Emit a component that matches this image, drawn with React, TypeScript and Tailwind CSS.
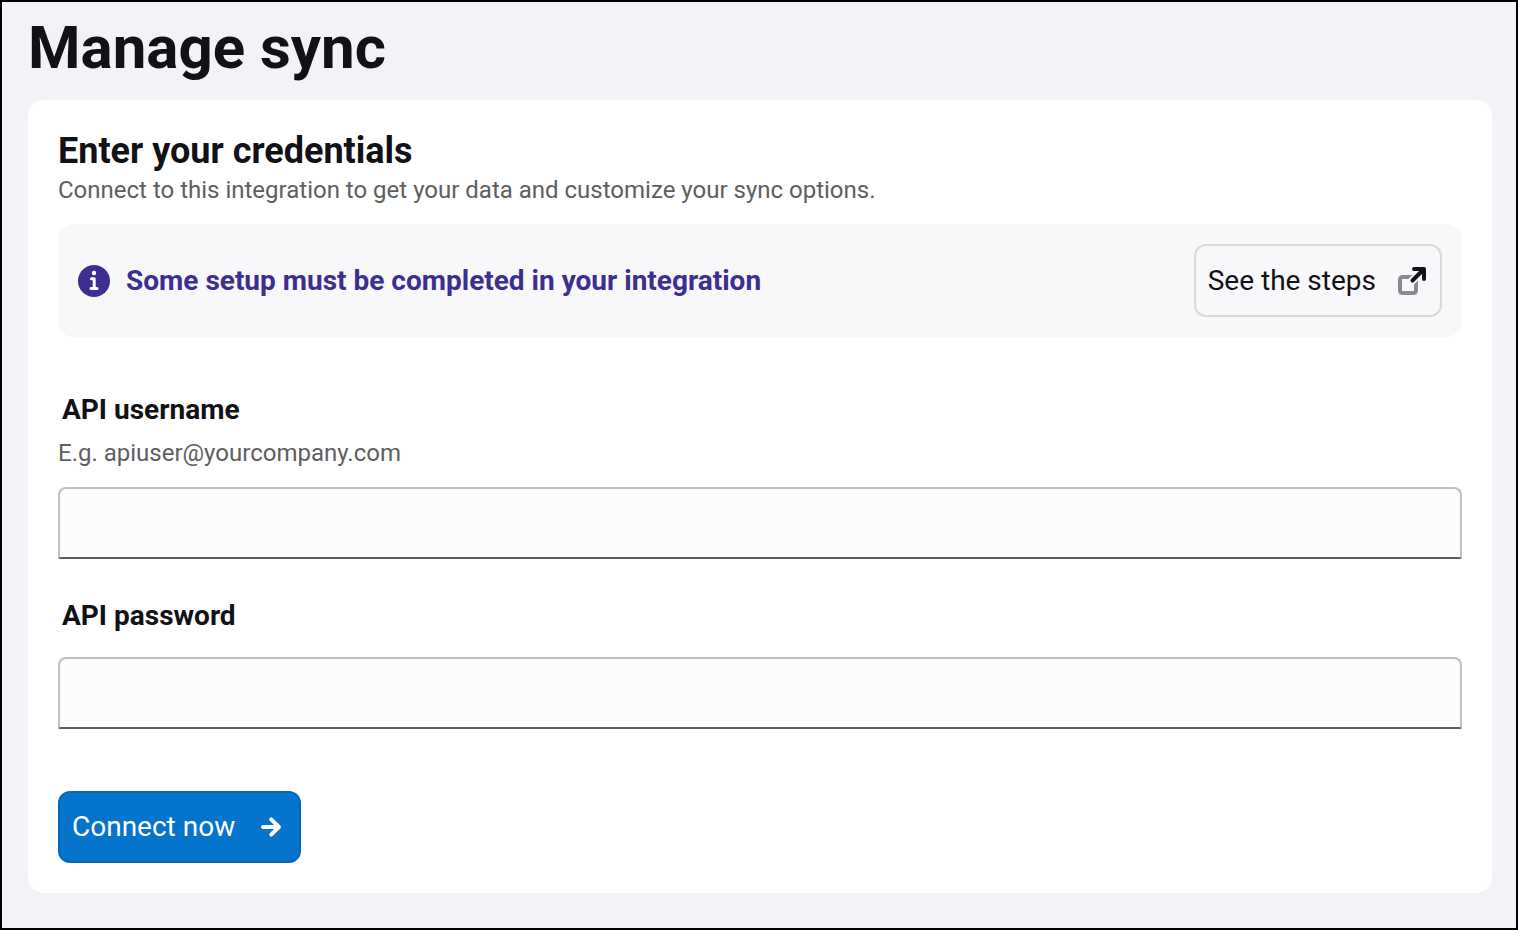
import React from "react";

function InfoIcon() {
  return (
    <svg viewBox="0 0 32 32" className="size-8 shrink-0" aria-hidden="true">
      <circle cx="16" cy="16" r="16" fill="#3d2f8f" />
      <circle cx="16" cy="8" r="2.2" fill="#fff" />
      <path d="M13.5 13.7h2.7v9.8M13 23.5h6" fill="none" stroke="#fff" strokeWidth="3" strokeLinecap="round" strokeLinejoin="round" />
    </svg>
  );
}

function OpenIcon() {
  return (
    <svg viewBox="0 0 32 32" className="size-8 shrink-0" fill="none" aria-hidden="true">
      <rect x="4" y="12" width="16" height="16" rx="2.5" stroke="#8a8a8e" strokeWidth="4" />
      <path d="M16 16 27 5" stroke="#f8f8fb" strokeWidth="8" strokeLinecap="round" />
      <path d="M18 4H28v10M27 5 16.5 15.5" stroke="#12121a" strokeWidth="4" strokeLinecap="round" strokeLinejoin="round" />
    </svg>
  );
}

function ArrowIcon() {
  return (
    <svg viewBox="0 0 32 32" className="size-8 shrink-0" fill="none" aria-hidden="true">
      <path d="M8 16H23M16.2 8.3 23.9 16 16.2 23.7" stroke="#fff" strokeWidth="4" strokeLinecap="round" strokeLinejoin="round" />
    </svg>
  );
}

const labelClass = "block px-1 text-[28px] leading-9 font-bold";
const inputClass =
  "block h-[72px] w-full rounded-t-lg rounded-b-xs border-2 border-[#bfbfbf] border-b-[#5c5c5c] bg-[#fcfcfc] px-3 text-[28px] outline-none";

export default function App() {
  return (
    <main className="min-h-screen border-2 border-black bg-[#f3f2f7] pr-6 pl-[26px] pt-[10px] pb-8 font-[Roboto,sans-serif] text-[#111116]">
      <h1 className="text-[60px] leading-[72px] font-bold">Manage sync</h1>
      <section className="mt-4 rounded-2xl bg-white p-[30px]">
        <h2 className="text-[36px] leading-[42px] font-bold">Enter your credentials</h2>
        <p className="text-[24px] leading-9 text-[#5e5e5e]">
          Connect to this integration to get your data and customize your sync options.
        </p>
        <div className="mt-4 flex items-center gap-4 rounded-2xl bg-[#f8f8fb] p-5">
          <InfoIcon />
          <p className="flex-1 text-[28px] leading-9 font-bold text-[#3d2f8f]">
            Some setup must be completed in your integration
          </p>
          <button type="button" className="flex h-[73px] items-center gap-5 rounded-xl border-2 border-[#d9d9dc] px-3 text-[28px] leading-9">
            See the steps
            <OpenIcon />
          </button>
        </div>
        <form className="mt-[55px]" onSubmit={(e) => e.preventDefault()}>
          <label htmlFor="api-username" className={labelClass}>API username</label>
          <p id="api-username-hint" className="mt-[7px] text-[24px] leading-9 text-[#5e5e5e]">
            E.g. apiuser@yourcompany.com
          </p>
          <input id="api-username" type="text" aria-describedby="api-username-hint" className={`mt-4 ${inputClass}`} />
          <label htmlFor="api-password" className={`mt-[39px] ${labelClass}`}>API password</label>
          <input id="api-password" type="password" className={`mt-[23px] ${inputClass}`} />
          <button type="submit" className="mt-[62px] flex h-[72px] items-center gap-5 rounded-xl border-2 border-[#0568b8] bg-[#0574cd] px-3 text-[28px] leading-9 text-white">
            Connect now
            <ArrowIcon />
          </button>
        </form>
      </section>
    </main>
  );
}
